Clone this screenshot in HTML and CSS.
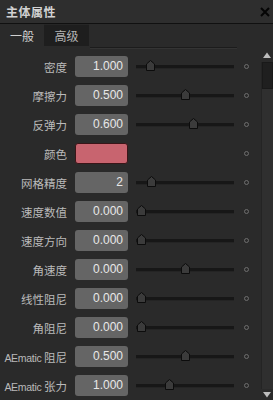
FILE: index.html
```html
<!DOCTYPE html>
<html>
<head>
<meta charset="utf-8">
<link rel="stylesheet" href="styles.css">
</head>
<body>
<div class="panel">
  <div class="title">
    <span class="title-text">主体属性</span>
    <svg class="close" width="10" height="10" viewBox="0 0 10 10"><path d="M1 1 L9 9 M9 1 L1 9" stroke="#050505" stroke-width="2"/></svg>
  </div>
  <div class="tabs">
    <div class="tab active">一般</div>
    <div class="tab">高级</div>
  </div>
  <div class="content">
    <div class="rows">
      <div class="group-line"></div>
      <div class="row"><span class="label">密度</span><span class="box">1.000</span><span class="slider"><span class="track"></span><svg class="handle" style="left:10px" width="9" height="11" viewBox="0 0 9 11"><path d="M0.5 4 L4.5 0.5 L8.5 4 L8.5 10.5 L0.5 10.5 Z" fill="#3b3b3b" stroke="#0c0c0c"/></svg></span><span class="dot"></span></div>
      <div class="row"><span class="label">摩擦力</span><span class="box">0.500</span><span class="slider"><span class="track"></span><svg class="handle" style="left:45px" width="9" height="11" viewBox="0 0 9 11"><path d="M0.5 4 L4.5 0.5 L8.5 4 L8.5 10.5 L0.5 10.5 Z" fill="#3b3b3b" stroke="#0c0c0c"/></svg></span><span class="dot"></span></div>
      <div class="row"><span class="label">反弹力</span><span class="box">0.600</span><span class="slider"><span class="track"></span><svg class="handle" style="left:53px" width="9" height="11" viewBox="0 0 9 11"><path d="M0.5 4 L4.5 0.5 L8.5 4 L8.5 10.5 L0.5 10.5 Z" fill="#3b3b3b" stroke="#0c0c0c"/></svg></span><span class="dot"></span></div>
      <div class="row"><span class="label">颜色</span><span class="box color"></span><span class="slider"></span><span class="dot"></span></div>
      <div class="row"><span class="label">网格精度</span><span class="box">2</span><span class="slider"><span class="track"></span><svg class="handle" style="left:11px" width="9" height="11" viewBox="0 0 9 11"><path d="M0.5 4 L4.5 0.5 L8.5 4 L8.5 10.5 L0.5 10.5 Z" fill="#3b3b3b" stroke="#0c0c0c"/></svg></span><span class="dot"></span></div>
      <div class="row"><span class="label">速度数值</span><span class="box">0.000</span><span class="slider"><span class="track"></span><svg class="handle" style="left:1px" width="9" height="11" viewBox="0 0 9 11"><path d="M0.5 4 L4.5 0.5 L8.5 4 L8.5 10.5 L0.5 10.5 Z" fill="#3b3b3b" stroke="#0c0c0c"/></svg></span><span class="dot"></span></div>
      <div class="row"><span class="label">速度方向</span><span class="box">0.000</span><span class="slider"><span class="track"></span><svg class="handle" style="left:1px" width="9" height="11" viewBox="0 0 9 11"><path d="M0.5 4 L4.5 0.5 L8.5 4 L8.5 10.5 L0.5 10.5 Z" fill="#3b3b3b" stroke="#0c0c0c"/></svg></span><span class="dot"></span></div>
      <div class="row"><span class="label">角速度</span><span class="box">0.000</span><span class="slider"><span class="track"></span><svg class="handle" style="left:45px" width="9" height="11" viewBox="0 0 9 11"><path d="M0.5 4 L4.5 0.5 L8.5 4 L8.5 10.5 L0.5 10.5 Z" fill="#3b3b3b" stroke="#0c0c0c"/></svg></span><span class="dot"></span></div>
      <div class="row"><span class="label">线性阻尼</span><span class="box">0.000</span><span class="slider"><span class="track"></span><svg class="handle" style="left:1px" width="9" height="11" viewBox="0 0 9 11"><path d="M0.5 4 L4.5 0.5 L8.5 4 L8.5 10.5 L0.5 10.5 Z" fill="#3b3b3b" stroke="#0c0c0c"/></svg></span><span class="dot"></span></div>
      <div class="row"><span class="label">角阻尼</span><span class="box">0.000</span><span class="slider"><span class="track"></span><svg class="handle" style="left:1px" width="9" height="11" viewBox="0 0 9 11"><path d="M0.5 4 L4.5 0.5 L8.5 4 L8.5 10.5 L0.5 10.5 Z" fill="#3b3b3b" stroke="#0c0c0c"/></svg></span><span class="dot"></span></div>
      <div class="row"><span class="label"><span class="en">AEmatic </span>阻尼</span><span class="box">0.500</span><span class="slider"><span class="track"></span><svg class="handle" style="left:45px" width="9" height="11" viewBox="0 0 9 11"><path d="M0.5 4 L4.5 0.5 L8.5 4 L8.5 10.5 L0.5 10.5 Z" fill="#3b3b3b" stroke="#0c0c0c"/></svg></span><span class="dot"></span></div>
      <div class="row"><span class="label"><span class="en">AEmatic </span>张力</span><span class="box">1.000</span><span class="slider"><span class="track"></span><svg class="handle" style="left:29px" width="9" height="11" viewBox="0 0 9 11"><path d="M0.5 4 L4.5 0.5 L8.5 4 L8.5 10.5 L0.5 10.5 Z" fill="#3b3b3b" stroke="#0c0c0c"/></svg></span><span class="dot"></span></div>
    </div>
    <div class="scrollbar">
      <svg class="arrow" width="8" height="6" viewBox="0 0 8 6"><path d="M0 6 L4 0.5 L8 6 Z" fill="#bdbdbd"/></svg>
      <div class="sb-track"><div class="sb-thumb"></div></div>
      <svg class="arrow" width="8" height="6" viewBox="0 0 8 6"><path d="M0 0 L4 5.5 L8 0 Z" fill="#bdbdbd"/></svg>
    </div>
  </div>
</div>
</body>
</html>
```
FILE: styles.css
```css
html, body {
  margin: 0;
  padding: 0;
  background: #2a2a2a;
}
.panel {
  width: 273px;
  height: 400px;
  overflow: hidden;
  background: #2a2a2a;
  display: flex;
  flex-direction: column;
  font-family: "Noto Sans CJK SC", "Liberation Sans", sans-serif;
}
.title {
  height: 23px;
  flex: none;
  display: flex;
  align-items: center;
  justify-content: space-between;
  padding: 0 2px 0 6px;
  background: #2e2e2e;
  border-bottom: 1px solid #101010;
}
.title-text {
  font-size: 12px;
  font-weight: bold;
  color: #d2d2d2;
  letter-spacing: 0.5px;
}
.close {
  margin-right: 1px;
}
.tabs {
  height: 22px;
  flex: none;
  display: flex;
  background: #2a2a2a;
}
.tab {
  width: 45px;
  display: flex;
  align-items: center;
  justify-content: center;
  font-size: 12px;
  color: #b4b4b4;
  background: #1e1e1e;
  border-top: 1px solid #262626;
}
.tab.active {
  width: 44px;
  background: #2a2a2a;
  color: #d0d0d0;
  border-top: none;
}
.content {
  flex: 1;
  display: flex;
  min-height: 0;
}
.rows {
  flex: 1;
  display: flex;
  flex-direction: column;
  padding-top: 0;
}
.group-line {
  height: 1px;
  margin: 1px 24px 3px 90px;
  background: #1c1c1c;
  border-bottom: 1px solid #343434;
}
.row {
  height: 29px;
  flex: none;
  display: flex;
  align-items: center;
}
.label {
  width: 67px;
  text-align: right;
  font-family: "Noto Sans CJK SC", sans-serif;
  font-size: 11.5px;
  color: #bababa;
  white-space: nowrap;
}
.en {
  font-family: "Liberation Sans", sans-serif;
  font-size: 10.5px;
  letter-spacing: -0.3px;
}
.box {
  width: 53px;
  height: 21px;
  margin-left: 8px;
  box-sizing: border-box;
  border-radius: 3px;
  background: #656565;
  color: #e8e8e8;
  font-family: "Liberation Sans", "DejaVu Sans", sans-serif;
  font-size: 12px;
  text-align: right;
  padding-right: 5px;
  line-height: 21px;
}
.box.color {
  background: #c8646f;
  border: 1px solid #3a1518;
}
.slider {
  position: relative;
  width: 98px;
  height: 11px;
  margin-left: 8px;
  display: flex;
  align-items: center;
}
.track {
  width: 98px;
  height: 3px;
  background: #171717;
  border-bottom: 1px solid #242424;
}
.handle {
  position: absolute;
  top: -1px;
}
.dot {
  width: 3px;
  height: 3px;
  margin-left: 10px;
  border-radius: 50%;
  border: 1px solid #6e6e6e;
}
.scrollbar {
  width: 12px;
  flex: none;
  display: flex;
  flex-direction: column;
  align-items: center;
  padding-top: 6px;
  padding-bottom: 2px;
}
.arrow {
  flex: none;
}
.sb-track {
  flex: 1;
  width: 12px;
  margin: 4px 0 3px;
  background: #2f2f2f;
  border-left: 1px solid #242424;
  box-sizing: border-box;
}
.sb-thumb {
  height: 25px;
  background: #1f1f1f;
  border: 1px solid #191919;
}
```
